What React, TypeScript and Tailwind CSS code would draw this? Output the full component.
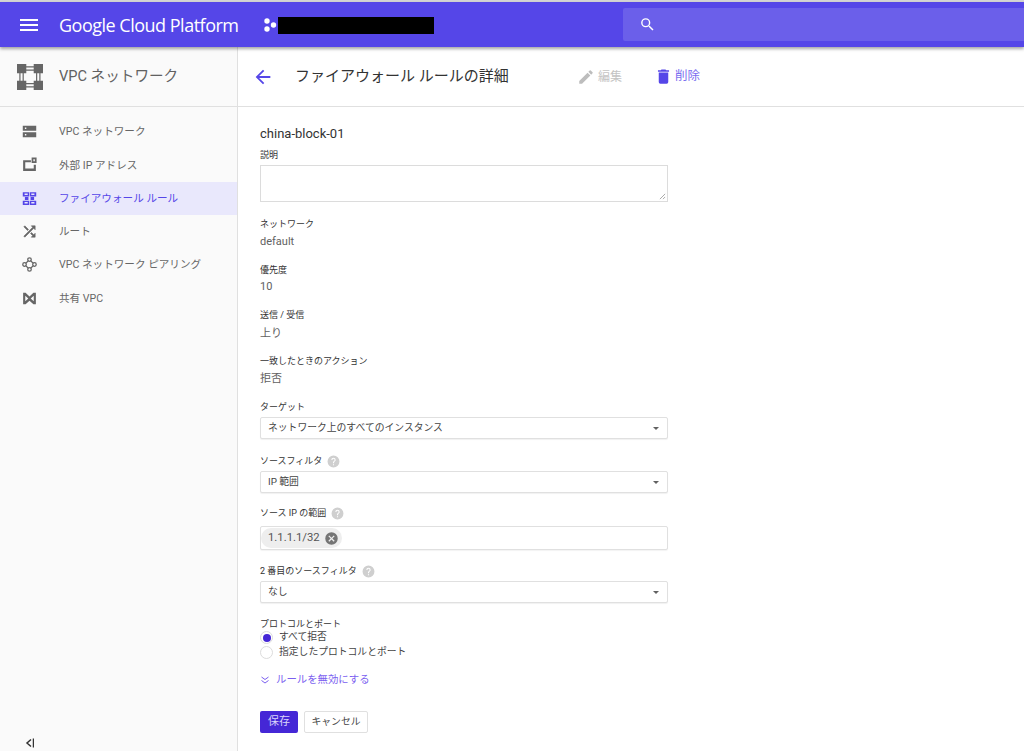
import { ReactNode } from "react";

const FONT = "font-['Roboto','Noto_Sans_CJK_JP',sans-serif]";

const navItems = [
  {
    label: "VPC ネットワーク",
    icon: (
      <path d="M2.500 4h19v7h-19zM2.500 13h19v7h-19zM5.500 6.500v2h2v-2zM5.500 15.500v2h2v-2z" fillRule="evenodd" />
    ),
  },
  {
    label: "外部 IP アドレス",
    icon: (
      <path
        d="M3 6h11v2.800H6v9h12V12.500h3V21H3zM15 2h7v8h-7zM17.500 4.500v3h2v-3z"
        fillRule="evenodd"
      />
    ),
  },
  {
    label: "ファイアウォール ルール",
    active: true,
    icon: (
      <path
        d="M2.500 3h9v6h-9zM12.500 3h9v6h-9zM2.500 15h9v6h-9zM12.500 15h9v6h-9zM5.500 10h5v4h-5zM13.500 10h5v4h-5zM5 5v2h4.500V5zM14.500 5v2H19V5zM5 17v2h4.500v-2zM14.500 17v2H19v-2z"
        fillRule="evenodd"
      />
    ),
  },
  {
    label: "ルート",
    icon: (
      <path
        d="M10.600 9.200 5.400 4 4 5.400l5.200 5.200zM14.500 4l2 2L4 18.600 5.400 20 18 7.500l2 2V4zM14.800 13.400l-1.400 1.400 3.100 3.100-2 2.100H20v-5.500l-2 2z"
        stroke="currentColor"
        strokeWidth="0.800"
      />
    ),
  },
  {
    label: "VPC ネットワーク ピアリング",
    icon: (
      <g fill="none" stroke="currentColor" strokeWidth="1.800">
        <circle cx="12" cy="5" r="2.500" />
        <circle cx="5" cy="12" r="2.500" />
        <circle cx="19" cy="12" r="2.500" />
        <circle cx="12" cy="19" r="2.500" />
        <path d="M10.400 6.600 6.600 10.400M13.600 6.600l3.800 3.800M6.600 13.600l3.800 3.800M17.400 13.600l-3.800 3.800" />
      </g>
    ),
  },
  {
    label: "共有 VPC",
    icon: (
      <path
        d="M3 4h3.500L12 9l5.500-5H21v16h-3.500L12 15l-5.500 5H3zM6 8v8l4.300-4zM18 8l-4.300 4 4.300 4z"
        fillRule="evenodd"
      />
    ),
  },
];

const HelpIcon = () => (
  <svg viewBox="0 0 24 24" className="w-[13px] h-[13px] text-[#cfcfcf]" fill="currentColor">
    <path d="M12 1a11 11 0 1 0 0 22 11 11 0 0 0 0-22zm1 18h-2v-2h2zm2.100-7.700-.9.900c-.8.700-1.200 1.300-1.200 2.800h-2v-.5c0-1.100.4-2.100 1.200-2.800l1.200-1.300c.4-.3.600-.800.600-1.400a2 2 0 0 0-4 0H8a4 4 0 0 1 8 0c0 .9-.4 1.700-.9 2.300z" />
  </svg>
);

const Label = ({ children, className = "" }: { children: ReactNode; className?: string }) => (
  <div className={`flex items-center gap-[5px] h-[16px] text-[9px] leading-[16px] text-[#333] ${className}`}>
    {children}
  </div>
);

const Value = ({ children, className = "mt-[2px]" }: { children: ReactNode; className?: string }) => (
  <div className={`h-[18px] text-[11px] leading-[18px] text-[#616161] ${className}`}>{children}</div>
);

const Select = ({ children, className = "" }: { children: ReactNode; className?: string }) => (
  <div
    className={`flex items-center justify-between w-[408px] h-[22px] pl-[7px] pr-[8px] bg-white border border-[#e0e0e0] rounded-[2px] shadow-[0_1px_1px_rgba(0,0,0,0.06)] text-[9.800px] text-[#444] ${className}`}
  >
    <span>{children}</span>
    <span className="w-0 h-0 border-x-[3.500px] border-x-transparent border-t-[3.500px] border-t-[#616161]" />
  </div>
);

export default function App() {
  return (
    <div className={`relative flex flex-col w-[1024px] h-[751px] overflow-hidden bg-white ${FONT}`}>
      <div className="h-[2px] bg-[#d4d4d4]" />
      <header className="relative z-10 flex items-center h-[45px] bg-[#5546e8] text-white shadow-[0_2px_3px_rgba(0,0,0,0.35)]">
        <svg viewBox="0 0 24 24" className="ml-[17px] w-[24px] h-[24px]" fill="currentColor">
          <path d="M3 18h18v-2H3zm0-5h18v-2H3zm0-7v2h18V6z" />
        </svg>
        <div className="ml-[18px] w-[182px] text-[18px] leading-none whitespace-nowrap font-['Open_Sans',sans-serif] tracking-[-0.5px]">
          Google Cloud Platform
        </div>
        <svg viewBox="0 0 14 14" className="ml-[22px] w-[14px] h-[14px]" fill="currentColor">
          <circle cx="4" cy="3" r="2.700" />
          <circle cx="4" cy="11" r="2.700" />
          <circle cx="10.500" cy="7" r="2.700" />
        </svg>
        <div className="ml-[1px] mt-[2px] w-[156px] h-[17px] bg-black" />
        <div className="flex items-center ml-[189px] w-[401px] h-[33px] bg-[#6b5fea] rounded-l-[2px]">
          <svg viewBox="0 0 24 24" className="ml-[16px] w-[17px] h-[17px]" fill="currentColor">
            <path d="M15.500 14h-.79l-.28-.27A6.470 6.470 0 0 0 16 9.500 6.500 6.500 0 1 0 9.500 16c1.610 0 3.090-.59 4.230-1.570l.27.28v.79l5 4.990L20.490 19zm-6 0a4.500 4.500 0 1 1 0-9 4.500 4.500 0 0 1 0 9z" />
          </svg>
        </div>
      </header>

      <div className="flex flex-1 min-h-0">
        <aside className="flex flex-col w-[238px] bg-[#fafafa] border-r border-[#e0e0e0]">
          <div className="flex items-center h-[60px] border-b border-[#e0e0e0] shrink-0">
            <svg viewBox="0 0 28 28" className="ml-[17px] w-[26px] h-[26px] text-[#666666]" fill="currentColor">
              <path
                d="M0 0h10v10H0zM18 0h10v10H18zM0 18h10v10H0zM18 18h10v10H18zM10 2.500h8v1.300h-8zM10 6h8v1.300h-8zM10 20.500h8v1.300h-8zM10 24h8v1.300h-8zM2.500 10h1.300v8H2.500zM6 10h1.300v8H6zM20.500 10h1.300v8h-1.300zM24 10h1.300v8H24z"
              />
            </svg>
            <div className="ml-[16px] text-[14.600px] text-[#616161] whitespace-nowrap">VPC ネットワーク</div>
          </div>
          <nav className="flex flex-col pt-[8px]">
            {navItems.map((item) => (
              <div
                key={item.label}
                className={`flex items-center h-[33.300px] ${item.active ? "bg-[#e9e8fc] text-[#5546e8]" : "text-[#666666]"}`}
              >
                <svg viewBox="0 0 24 24" className="ml-[21px] w-[17px] h-[17px]" fill="currentColor">
                  {item.icon}
                </svg>
                <span className="ml-[21px] mt-[1px] text-[10.600px] whitespace-nowrap">{item.label}</span>
              </div>
            ))}
          </nav>
          <div className="mt-auto flex items-center ml-[24px] mb-[3px] h-[10px] text-[#333]">
            <svg viewBox="0 0 10 10" className="w-[10px] h-[10px]" fill="none" stroke="currentColor" strokeWidth="1.500">
              <path d="M7 1.500 3 5l4 3.500M9.500 0.500v9" />
            </svg>
          </div>
        </aside>

        <main className="flex flex-col flex-1 min-w-0">
          <div className="flex items-center h-[60px] border-b border-[#e0e0e0] shrink-0">
            <svg viewBox="0 0 24 24" className="ml-[14px] w-[22px] h-[22px] text-[#5546e8]" fill="currentColor">
              <path d="M20 11H7.800l5.600-5.600L12 4l-8 8 8 8 1.400-1.400L7.800 13H20z" />
            </svg>
            <h1 className="ml-[21px] w-[282px] text-[15px] font-normal text-[#333] whitespace-nowrap">
              ファイアウォール ルールの詳細
            </h1>
            <svg viewBox="0 0 24 24" className="w-[18px] h-[18px] text-[#bdbdbd]" fill="currentColor">
              <path d="M3 17.250V21h3.750L17.800 9.940l-3.750-3.750zM20.700 7a1 1 0 0 0 0-1.400l-2.340-2.340a1 1 0 0 0-1.400 0l-1.830 1.830 3.750 3.750z" />
            </svg>
            <span className="ml-[3px] text-[12px] text-[#c4c4c4]">編集</span>
            <svg viewBox="0 0 24 24" className="ml-[32px] w-[19px] h-[19px] text-[#5546e8]" fill="currentColor">
              <path d="M6 19a2 2 0 0 0 2 2h8a2 2 0 0 0 2-2V7H6zM19 4h-3.500l-1-1h-5l-1 1H5v2h14z" />
            </svg>
            <span className="ml-[2px] text-[12.500px] text-[#7b6ff0]">削除</span>
          </div>

          <div className="flex flex-col pl-[22px] pt-[18px]">
            <div className="h-[18px] text-[13px] leading-[18px] text-[#333]">china-block-01</div>
            <Label className="mt-[4px]">説明</Label>
            <div className="relative w-[408px] h-[37px] mt-[2px] border border-[#dcdcdc]">
              <svg viewBox="0 0 8 8" className="absolute right-[1px] bottom-[1px] w-[7px] h-[7px] text-[#888]" fill="none" stroke="currentColor" strokeWidth="0.800">
                <path d="M1 7 7 1M4.500 7 7 4.500" />
              </svg>
            </div>
            <Label className="mt-[14px]">ネットワーク</Label>
            <Value className="mt-[1px]">default</Value>
            <Label className="mt-[11px]">優先度</Label>
            <Value className="mt-0">10</Value>
            <Label className="mt-[11px]">送信 / 受信</Label>
            <Value>上り</Value>
            <Label className="mt-[10px]">一致したときのアクション</Label>
            <Value className="mt-[1px]">拒否</Value>
            <Label className="mt-[11px]">ターゲット</Label>
            <Select className="mt-[2px]">ネットワーク上のすべてのインスタンス</Select>
            <Label className="mt-[14px]">
              ソースフィルタ <HelpIcon />
            </Label>
            <Select className="mt-[2px]">IP 範囲</Select>
            <Label className="mt-[12px]">
              ソース IP の範囲 <HelpIcon />
            </Label>
            <div className="flex items-center w-[408px] h-[24px] mt-[5px] bg-white border border-[#e0e0e0] rounded-[2px] shadow-[0_1px_1px_rgba(0,0,0,0.05)]">
              <div className="flex items-center h-[20px] pl-[7px] pr-[3px] bg-[#eeeeee] rounded-full text-[11.300px] text-[#555]">
                1.1.1.1/32
                <svg viewBox="0 0 24 24" className="ml-[4px] w-[15px] h-[15px] text-[#757575]" fill="currentColor">
                  <path d="M12 2a10 10 0 1 0 0 20 10 10 0 0 0 0-20zm5 13.600L15.600 17 12 13.400 8.400 17 7 15.600 10.600 12 7 8.400 8.400 7l3.600 3.600L15.600 7 17 8.400 13.400 12z" />
                </svg>
              </div>
            </div>
            <Label className="mt-[13px]">
              2 番目のソースフィルタ <HelpIcon />
            </Label>
            <Select className="mt-[2px]">なし</Select>
            <Label className="mt-[13px]">プロトコルとポート</Label>
            <div className="flex items-center h-[15px] -mt-[2px] text-[9.800px] text-[#444]">
              <span className="flex items-center justify-center w-[13px] h-[13px] rounded-full border border-[#dcdcdc]">
                <span className="w-[8px] h-[8px] rounded-full bg-[#4527d6]" />
              </span>
              <span className="ml-[6px]">すべて拒否</span>
            </div>
            <div className="flex items-center h-[15px] text-[9.800px] text-[#444]">
              <span className="w-[13px] h-[13px] rounded-full border border-[#dcdcdc]" />
              <span className="ml-[6px]">指定したプロトコルとポート</span>
            </div>
            <div className="flex items-center h-[16px] mt-[12px] text-[10.400px] text-[#7b5ff0]">
              <svg viewBox="0 0 10 10" className="w-[10px] h-[10px]" fill="none" stroke="currentColor" strokeWidth="1">
                <path d="M1.500 2 5 4.500 8.500 2M1.500 5.500 5 8l3.500-2.500" />
              </svg>
              <span className="ml-[6px]">ルールを無効にする</span>
            </div>
            <div className="flex gap-[6px] mt-[23px]">
              <button className="w-[38px] h-[22px] bg-[#4527d6] rounded-[2px] text-[11px] text-[#d9d4fa]">保存</button>
              <button className="w-[64px] h-[22px] bg-white border border-[#e0e0e0] rounded-[2px] text-[9.800px] text-[#444]">
                キャンセル
              </button>
            </div>
          </div>
        </main>
      </div>
    </div>
  );
}
